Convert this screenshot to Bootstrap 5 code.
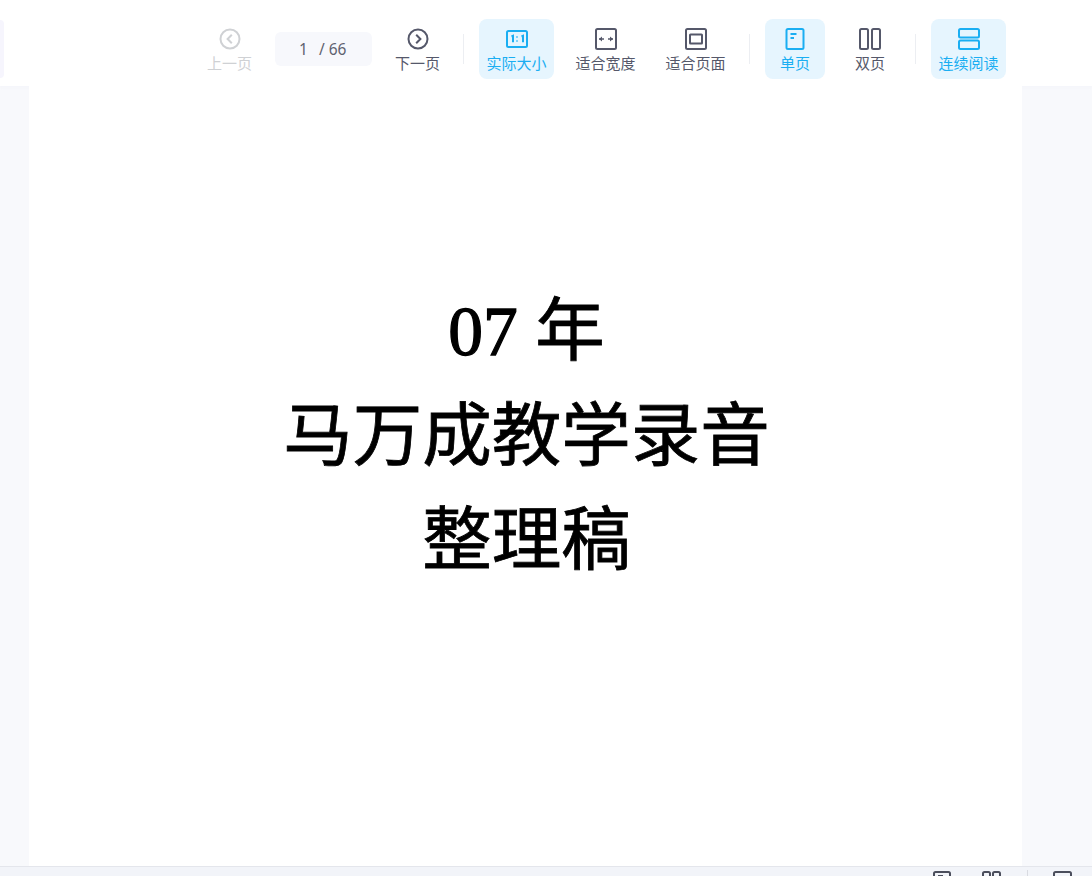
<!doctype html>
<html lang="zh-CN"><head><meta charset="utf-8"><title>PDF</title>
<link href="https://cdn.jsdelivr.net/npm/bootstrap@5.3.0/dist/css/bootstrap.min.css" rel="stylesheet">
<style>
html,body{height:100%;overflow:hidden}
body{background:#f8f9fc;font-family:"Noto Sans","Noto Sans CJK SC",sans-serif;color:#4b4e5c}
.shell{height:876px}
.topbar{height:86px;background:#fff;padding:12px 86px 0 0;flex:none;box-shadow:0 1px 3px rgba(240,242,248,.6)}
.sidetab{width:4px;height:58px;left:0;top:20px;background:#f6f5fd;border-radius:0 5px 5px 0}
.tool{height:60px;width:75px;border-radius:8px;flex:none;padding-top:9px;font-size:15px;line-height:20px;white-space:nowrap;color:#55586a}
.tool svg{display:block;margin-bottom:3px}
.tool.two{width:60px}
.tool.on{background:#e6f5fe;color:#1aaef2}
.tool.off{color:#cfd1d4}
.pager{width:97px;height:34px;background:#f7f8fc;border-radius:6px;margin:0 8px;font-size:15.500px;padding:1px 0 0 24px;gap:11px;color:#5f6270}
.divide{width:1px;height:30px;background:#eceef2;flex:none}
.d1{margin:0 15px 0 8px}.d2{margin:0 15px 0 16px}.d3{margin:0 15px}
.gap14{margin-left:14px}
.gap15{margin-left:15px}
.workspace{flex:1;min-height:0;padding:0 70px 0 29px}
.sheet{background:#fff;height:100%;padding-top:194px;padding-left:2px;text-align:center;color:#000;font-family:"Liberation Serif","Noto Sans CJK SC",serif;font-size:69.500px;line-height:104.500px;-webkit-text-stroke:.8px #000}
.statusbar{height:10px;background:#f2f4f9;border-top:1px solid #e4e6ec;overflow:hidden;flex:none}
.sbicon{top:4px}
.sbline{left:1027px;top:3px;width:1px;height:8px;background:#d9dbe1}
svg .st{fill:none;stroke:currentColor;stroke-width:2}
.numerals{-webkit-text-stroke:1.300px #000}
</style></head>
<body>
<div class="shell d-flex flex-column position-relative">
  <div class="sidetab position-absolute"></div>
  <div class="topbar d-flex align-items-center justify-content-end">
    <div class="tool off d-flex flex-column align-items-center">
      <svg width="22" height="22" viewBox="0 0 22 22"><circle class="st" cx="11" cy="11" r="9.500"/><path class="st" d="M12.800 6.800 8.600 11l4.200 4.200"/></svg>上一页</div>
    <div class="pager d-flex align-items-center"><span>1</span><span>/ 66</span></div>
    <div class="tool d-flex flex-column align-items-center">
      <svg width="22" height="22" viewBox="0 0 22 22"><circle class="st" cx="11" cy="11" r="9.500"/><path class="st" d="M9.200 6.800 13.400 11l-4.200 4.200"/></svg>下一页</div>
    <div class="divide d1"></div>
    <div class="tool on d-flex flex-column align-items-center">
      <svg width="22" height="22" viewBox="0 0 22 22"><rect class="st" x="1" y="3" width="20" height="16" rx="1.500"/><path class="st" d="M5.500 8.500 7 7.800v6.400M15.500 8.500 17 7.800v6.400"/><path class="st" d="M11 8.500v1M11 12.500v1"/></svg>实际大小</div>
    <div class="tool gap14 d-flex flex-column align-items-center">
      <svg width="22" height="22" viewBox="0 0 22 22"><rect class="st" x="1" y="1" width="20" height="20" rx="1.500"/><path d="M4 11h5M13 11h5" stroke="currentColor" stroke-width="1.300"/><path d="M4 11l3-2.500v5zM18 11l-3-2.500v5z" fill="currentColor"/></svg>适合宽度</div>
    <div class="tool gap15 d-flex flex-column align-items-center">
      <svg width="22" height="22" viewBox="0 0 22 22"><rect class="st" x="1" y="1" width="20" height="20" rx="1.500"/><rect class="st" x="5" y="6.500" width="12" height="9" rx=".5"/></svg>适合页面</div>
    <div class="divide d2"></div>
    <div class="tool two on d-flex flex-column align-items-center">
      <svg width="22" height="22" viewBox="0 0 22 22"><rect class="st" x="2.500" y="1" width="17" height="20" rx="1.500"/><path class="st" d="M6.500 6h6M6.500 10h3.500"/></svg>单页</div>
    <div class="tool two gap15 d-flex flex-column align-items-center">
      <svg width="22" height="22" viewBox="0 0 22 22"><rect class="st" x="1" y="1" width="8" height="20" rx="1.500"/><rect class="st" x="13" y="1" width="8" height="20" rx="1.500"/></svg>双页</div>
    <div class="divide d3"></div>
    <div class="tool on d-flex flex-column align-items-center">
      <svg width="22" height="22" viewBox="0 0 22 22"><rect class="st" x="1" y="1" width="20" height="8.500" rx="1.500"/><rect class="st" x="1" y="12.500" width="20" height="8.500" rx="1.500"/></svg>连续阅读</div>
  </div>
  <div class="workspace">
    <div class="sheet"><div><span class="numerals">07</span> 年</div><div>马万成教学录音</div><div>整理稿</div></div>
  </div>
  <div class="statusbar position-relative">
    <svg class="sbicon position-absolute" style="left:933px" width="18" height="18" viewBox="0 0 18 18"><rect class="st" x="1" y="1" width="16" height="16" rx="1.500"/><path class="st" d="M5 5h5"/></svg>
    <svg class="sbicon position-absolute" style="left:982px" width="19" height="18" viewBox="0 0 19 18"><rect class="st" x="1" y="1" width="7" height="16" rx="1.500"/><rect class="st" x="11" y="1" width="7" height="16" rx="1.500"/></svg>
    <div class="sbline position-absolute"></div>
    <svg class="sbicon position-absolute" style="left:1053px" width="19" height="18" viewBox="0 0 19 18"><rect class="st" x="1" y="1" width="17" height="16" rx="1.500"/></svg>
  </div>
</div>
<script src="https://cdn.jsdelivr.net/npm/bootstrap@5.3.0/dist/js/bootstrap.bundle.min.js"></script>
</body></html>
